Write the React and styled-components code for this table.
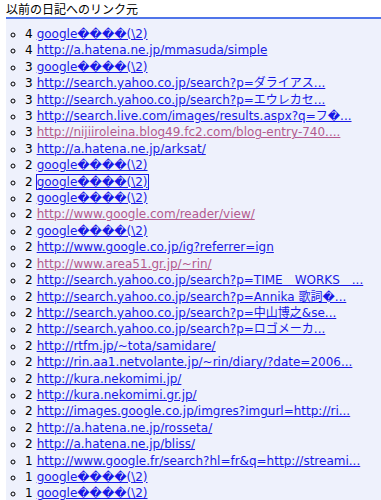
import React from 'react';
import styled, { createGlobalStyle } from 'styled-components';

const GlobalStyle = createGlobalStyle`
  body {
    margin: 0;
    background: #ffffff;
    font-family: 'DejaVu Sans', 'Noto Sans CJK JP', sans-serif;
  }
`;

const Section = styled.div`
  padding: 2px 0 0 6px;
`;

const Title = styled.h3`
  margin: 0;
  font-size: 12px;
  font-weight: normal;
  line-height: 14px;
  color: #000;
  font-family: 'Noto Sans CJK JP', 'DejaVu Sans', sans-serif;
  border-bottom: 2px solid #4f75ea;
  padding-bottom: 1px;
`;

const Panel = styled.div`
  background: #eef1fc;
  padding: 7px 0 4px;
`;

const List = styled.ul`
  margin: 0;
  padding-left: 19px;
  list-style: circle;
  font-size: 12px;
  line-height: 16.4px;
  color: #000;
  white-space: nowrap;
`;

const Item = styled.li`
  margin: 0;
`;

const Count = styled.span`
  margin-right: 4px;
`;

const RefLink = styled.a`
  color: ${(p) => (p.$visited ? '#b45a8e' : '#1818e6')};
  text-decoration: underline;
  outline: ${(p) => (p.$focused ? '1px solid #1818e6' : 'none')};
  outline-offset: 0;
`;

const G = 'google\uFFFD\uFFFD\uFFFD\uFFFD(\\2)';

const refs = [
  [4, G],
  [4, 'http://a.hatena.ne.jp/mmasuda/simple'],
  [3, G],
  [3, 'http://search.yahoo.co.jp/search?p=ダライアス...'],
  [3, 'http://search.yahoo.co.jp/search?p=エウレカセ...'],
  [3, 'http://search.live.com/images/results.aspx?q=フ\uFFFD...'],
  [3, 'http://nijiiroleina.blog49.fc2.com/blog-entry-740....', 'visited'],
  [3, 'http://a.hatena.ne.jp/arksat/'],
  [2, G],
  [2, G, 'focused'],
  [2, G],
  [2, 'http://www.google.com/reader/view/', 'visited'],
  [2, G],
  [2, 'http://www.google.co.jp/ig?referrer=ign'],
  [2, 'http://www.area51.gr.jp/~rin/', 'visited'],
  [2, 'http://search.yahoo.co.jp/search?p=TIME\u3000WORKS\u3000...'],
  [2, 'http://search.yahoo.co.jp/search?p=Annika 歌詞\uFFFD...'],
  [2, 'http://search.yahoo.co.jp/search?p=中山博之&se...'],
  [2, 'http://search.yahoo.co.jp/search?p=ロゴメーカ...'],
  [2, 'http://rtfm.jp/~tota/samidare/'],
  [2, 'http://rin.aa1.netvolante.jp/~rin/diary/?date=2006...'],
  [2, 'http://kura.nekomimi.jp/'],
  [2, 'http://kura.nekomimi.gr.jp/'],
  [2, 'http://images.google.co.jp/imgres?imgurl=http://ri...'],
  [2, 'http://a.hatena.ne.jp/rosseta/'],
  [2, 'http://a.hatena.ne.jp/bliss/'],
  [1, 'http://www.google.fr/search?hl=fr&q=http://streami...'],
  [1, G],
  [1, G],
];

const App = () => {
  return (
    <>
      <GlobalStyle />
      <Section>
        <Title>以前の日記へのリンク元</Title>
        <Panel>
          <List>
            {refs.map(([n, text, state], i) => (
              <Item key={i}>
                <Count>{n}</Count>
                <RefLink
                  href="#"
                  $visited={state === 'visited'}
                  $focused={state === 'focused'}
                >
                  {text}
                </RefLink>
              </Item>
            ))}
          </List>
        </Panel>
      </Section>
    </>
  );
};

export default App;
